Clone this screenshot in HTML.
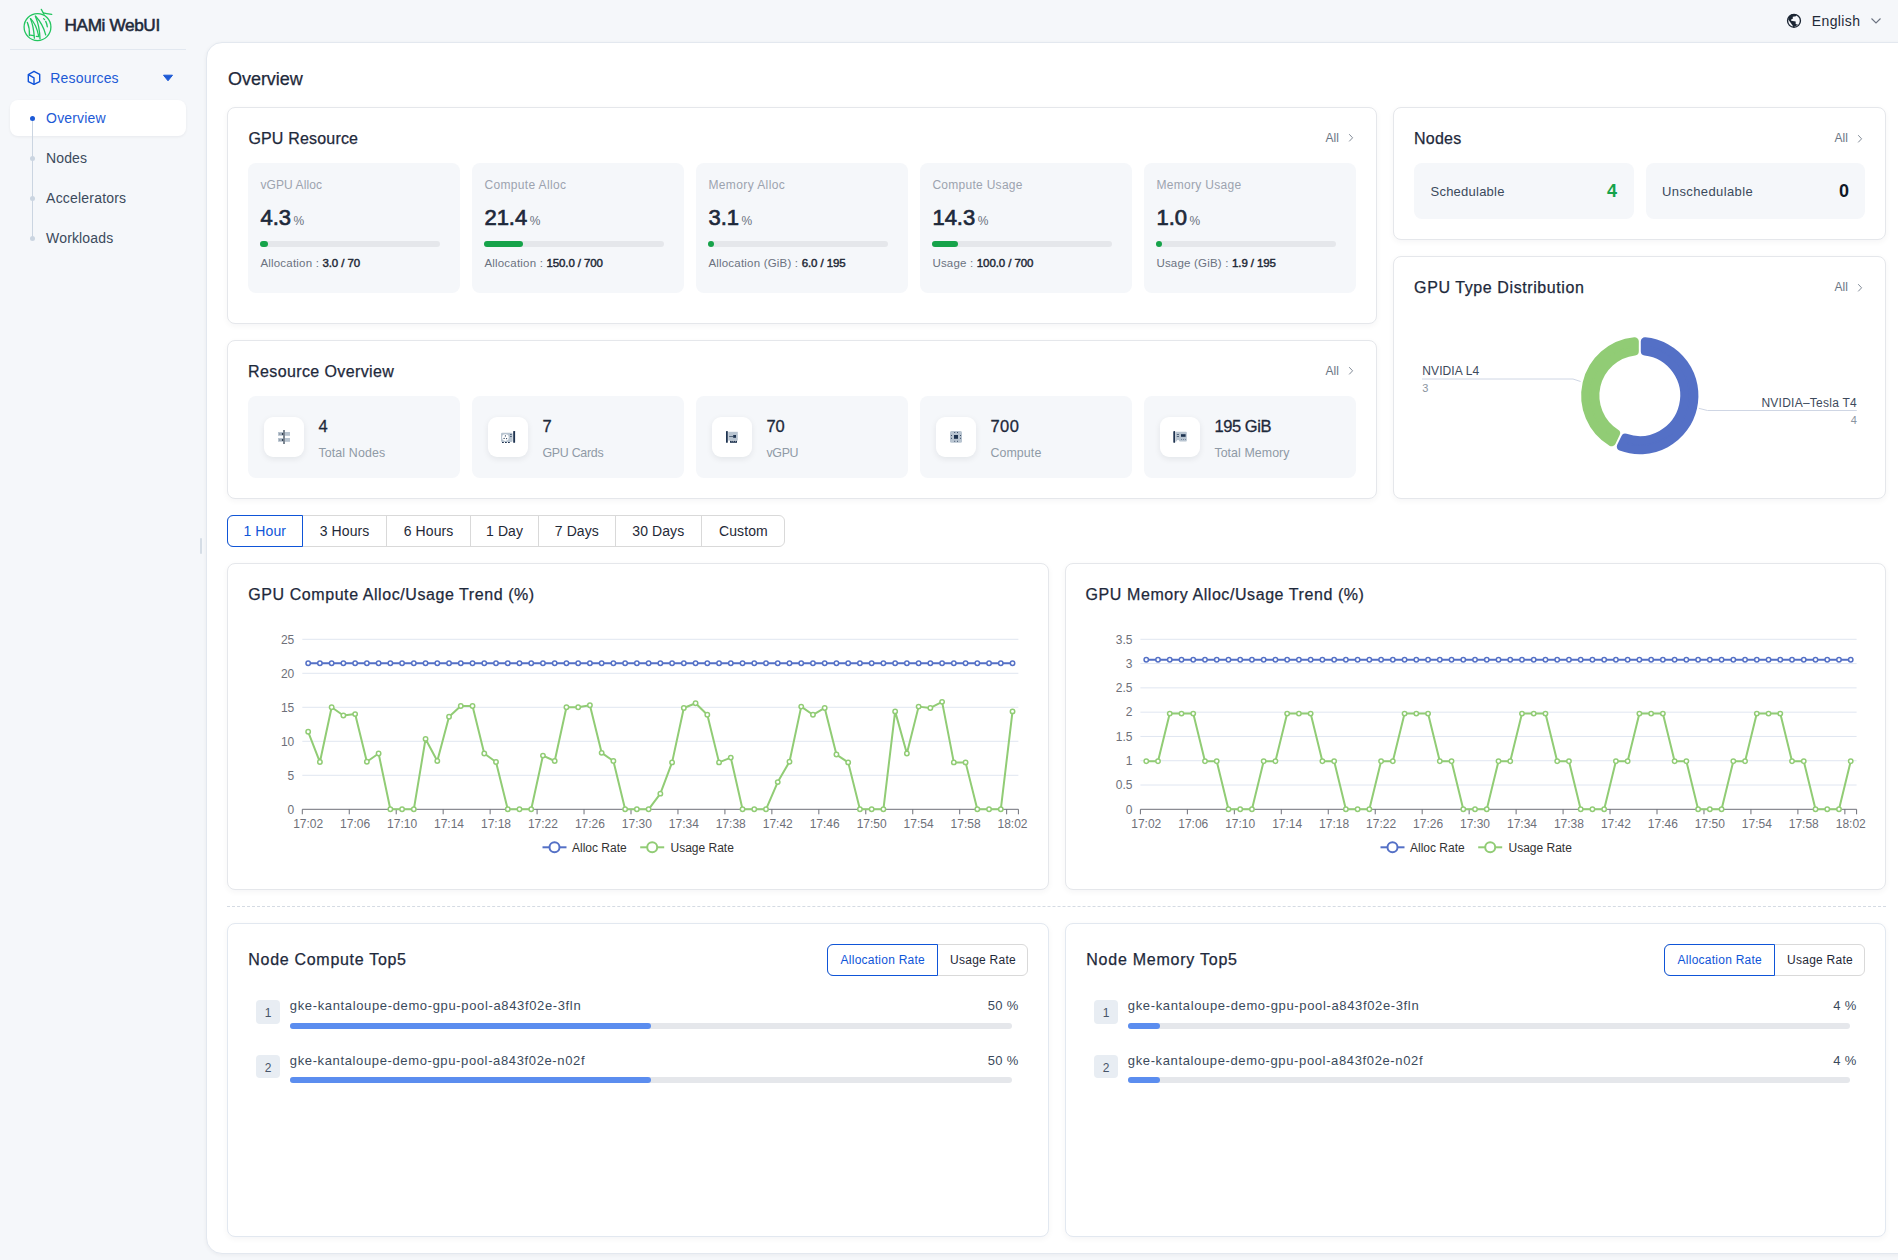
<!DOCTYPE html><html><head><meta charset="utf-8"><style>
html,body{margin:0;padding:0;width:1898px;height:1260px;overflow:hidden;background:#f5f7fa;font-family:"Liberation Sans",sans-serif;}
.t{position:absolute;line-height:1;white-space:nowrap;}
.b{position:absolute;box-sizing:border-box;}
svg{position:absolute;left:0;top:0;}
</style></head><body>
<div class="b" style="left:206px;top:41.8px;width:1760px;height:1212.7px;background:#fff;border:1px solid #e3e8ef;border-radius:16px;box-shadow:0 1px 4px rgba(15,23,42,0.05);"></div>
<div class="b" style="left:10px;top:49px;width:176px;height:1px;background:#e2e8f0;"></div>
<svg width="60" height="50" style="left:18px;top:6px" viewBox="0 0 60 50">
<g fill="none" stroke="#22c55e" stroke-width="1.3" stroke-linecap="round">
<ellipse cx="19.5" cy="21.1" rx="13.4" ry="13.5"/>
<path d="M26 8.2 L23.3 3.4"/>
<path d="M25.2 6.8 Q28 7.6 33.7 8.4"/>
<path d="M9.3 16.3 Q11.8 22 11.4 29.5"/>
<path d="M12.4 12.6 Q15.6 20 16.4 32.2"/>
<path d="M12.6 12.6 Q18.2 18 20.7 30.2"/>
<path d="M17.4 10.2 Q21.6 20 22 32.8"/>
<path d="M17.6 10.2 Q25 18 27.7 28.8"/>
<path d="M25.6 12.6 L26.6 13.6"/>
<path d="M27.7 15.4 Q29 18 29.3 20.8"/>
<path d="M12.3 29.1 L15.7 29.6"/>
<path d="M18.3 30.4 L20.8 30.6"/>
</g></svg>
<div class="t" style="top:16.74px;font-size:17.2px;color:#1e293b;letter-spacing:-0.37px;left:64.50px;-webkit-text-stroke:0.55px #1e293b;">HAMi WebUI</div>
<svg width="16" height="16" style="left:26px;top:70px" viewBox="0 0 16 16">
<g fill="none" stroke="#0f52d9" stroke-width="1.4" stroke-linejoin="round">
<path d="M8 1.3 L13.7 4.4 L13.7 11.6 L8 14.4 L2.3 11.6 L2.3 4.6 Z"/>
<path d="M2.3 4.6 L8 7.8 L8 14.4"/>
</g></svg>
<div class="t" style="top:70.85px;font-size:14px;color:#1d5ad6;letter-spacing:0.173px;left:50.30px;">Resources</div>
<svg width="12" height="8" style="left:162px;top:74px" viewBox="0 0 12 8"><path d="M1.5 1.2 L10.5 1.2 L6 6.8 Z" fill="#1d5ad6" stroke="#1d5ad6" stroke-width="1" stroke-linejoin="round"/></svg>
<div class="b" style="left:10px;top:100px;width:176px;height:35.5px;background:#fff;border-radius:8px;box-shadow:0 1px 3px rgba(15,23,42,0.06);"></div>
<div class="b" style="left:31.8px;top:118px;width:1.2px;height:120px;background:#cbd5e1;"></div>
<div class="b" style="left:29.9px;top:115.5px;width:5px;height:5px;border-radius:50%;background:#1d5ad6"></div>
<div class="b" style="left:29.9px;top:155.5px;width:5px;height:5px;border-radius:50%;background:#cbd5e1"></div>
<div class="b" style="left:29.9px;top:195.5px;width:5px;height:5px;border-radius:50%;background:#cbd5e1"></div>
<div class="b" style="left:29.9px;top:235.5px;width:5px;height:5px;border-radius:50%;background:#cbd5e1"></div>
<div class="t" style="top:110.95px;font-size:14px;color:#1d5ad6;letter-spacing:0.15px;left:46.10px;">Overview</div>
<div class="t" style="top:150.95px;font-size:14px;color:#3b4a5c;letter-spacing:0.1px;left:46.10px;">Nodes</div>
<div class="t" style="top:190.85px;font-size:14px;color:#3b4a5c;letter-spacing:0.2px;left:46.10px;">Accelerators</div>
<div class="t" style="top:230.95px;font-size:14px;color:#3b4a5c;letter-spacing:0.15px;left:46.10px;">Workloads</div>
<div class="b" style="left:200px;top:538px;width:2px;height:16px;background:#d5dde6;border-radius:1px;"></div>
<svg width="1898" height="40" style="left:0;top:0" viewBox="0 0 1898 40">
<circle cx="1794" cy="20.8" r="6.45" fill="none" stroke="#1b2533" stroke-width="1.35"/>
<path d="M1788.25 19.55 L1788.87 16.87 L1791.13 14.39 L1794.02 13.98 L1796.49 14.39 L1795.88 16.25 L1792.78 16.87 L1792.78 18.72 L1791.13 19.55 L1791.13 20.78 L1795.67 21.4 L1795.67 24.08 L1798.14 24.7 L1793.2 27.18 L1792.78 25.73 Z" fill="#1b2533"/>
</svg>
<div class="t" style="top:13.65px;font-size:14px;color:#1f2937;letter-spacing:0.378px;left:1811.80px;">English</div>
<svg width="12" height="8" style="left:1870px;top:17px" viewBox="0 0 12 8"><path d="M1.5 1.5 L6 6 L10.5 1.5" fill="none" stroke="#6b7280" stroke-width="1.1"/></svg>
<div class="t" style="top:70.06px;font-size:18px;color:#1e293b;letter-spacing:-0.045px;left:228.00px;-webkit-text-stroke:0.25px currentColor;">Overview</div>
<div class="b" style="left:227px;top:107px;width:1150px;height:217px;background:#fff;border:1px solid #e5e7eb;border-radius:8px;box-shadow:0 2px 6px rgba(15,23,42,0.045);"></div>
<div class="t" style="top:131.46px;font-size:16px;color:#1e293b;letter-spacing:0.182px;left:248.40px;-webkit-text-stroke:0.25px currentColor;">GPU Resource</div>
<div class="t" style="top:131.74px;font-size:12px;color:#6b7685;letter-spacing:0.1px;left:1325.50px;">All</div>
<svg width="6" height="10" style="left:1347.8px;top:133.3px" viewBox="0 0 6 10"><path d="M1.2 1.2 L4.6 4.8 L1.2 8.4" fill="none" stroke="#7b8591" stroke-width="0.95"/></svg>
<div class="b" style="left:248px;top:163px;width:212px;height:130px;background:#f5f7fa;border-radius:8px;"></div>
<div class="t" style="top:178.94px;font-size:12px;color:#9ca3af;letter-spacing:0.106px;left:260.40px;">vGPU Alloc</div>
<div class="t" style="left:260.4px;top:206.78px;font-size:22px;color:#1e293b;-webkit-text-stroke:0.7px #1e293b;letter-spacing:0px">4.3<span style="font-size:12px;font-weight:400;color:#6b7280;-webkit-text-stroke:0;margin-left:2.5px">%</span></div>
<div class="b" style="left:260px;top:241px;width:180px;height:6px;background:#e5e7eb;border-radius:3px;"></div>
<div class="b" style="left:260px;top:241px;width:7.74px;height:6px;background:#16a34a;border-radius:3px;"></div>
<div class="t" style="left:260.4px;top:258.07px;font-size:11.5px;color:#6b7280;letter-spacing:0.2px">Allocation : <span style="color:#1f2937;-webkit-text-stroke:0.45px #1f2937;letter-spacing:-0.1px">3.0 / 70</span></div>
<div class="b" style="left:472px;top:163px;width:212px;height:130px;background:#f5f7fa;border-radius:8px;"></div>
<div class="t" style="top:178.94px;font-size:12px;color:#9ca3af;letter-spacing:0.347px;left:484.40px;">Compute Alloc</div>
<div class="t" style="left:484.4px;top:206.78px;font-size:22px;color:#1e293b;-webkit-text-stroke:0.7px #1e293b;letter-spacing:0px">21.4<span style="font-size:12px;font-weight:400;color:#6b7280;-webkit-text-stroke:0;margin-left:2.5px">%</span></div>
<div class="b" style="left:484px;top:241px;width:180px;height:6px;background:#e5e7eb;border-radius:3px;"></div>
<div class="b" style="left:484px;top:241px;width:38.52px;height:6px;background:#16a34a;border-radius:3px;"></div>
<div class="t" style="left:484.4px;top:258.07px;font-size:11.5px;color:#6b7280;letter-spacing:0.2px">Allocation : <span style="color:#1f2937;-webkit-text-stroke:0.45px #1f2937;letter-spacing:-0.1px">150.0 / 700</span></div>
<div class="b" style="left:696px;top:163px;width:212px;height:130px;background:#f5f7fa;border-radius:8px;"></div>
<div class="t" style="top:178.94px;font-size:12px;color:#9ca3af;letter-spacing:0.402px;left:708.40px;">Memory Alloc</div>
<div class="t" style="left:708.4px;top:206.78px;font-size:22px;color:#1e293b;-webkit-text-stroke:0.7px #1e293b;letter-spacing:0px">3.1<span style="font-size:12px;font-weight:400;color:#6b7280;-webkit-text-stroke:0;margin-left:2.5px">%</span></div>
<div class="b" style="left:708px;top:241px;width:180px;height:6px;background:#e5e7eb;border-radius:3px;"></div>
<div class="b" style="left:708px;top:241px;width:6px;height:6px;background:#16a34a;border-radius:3px;"></div>
<div class="t" style="left:708.4px;top:258.07px;font-size:11.5px;color:#6b7280;letter-spacing:0.2px">Allocation (GiB) : <span style="color:#1f2937;-webkit-text-stroke:0.45px #1f2937;letter-spacing:-0.1px">6.0 / 195</span></div>
<div class="b" style="left:920px;top:163px;width:212px;height:130px;background:#f5f7fa;border-radius:8px;"></div>
<div class="t" style="top:178.94px;font-size:12px;color:#9ca3af;letter-spacing:0.28px;left:932.40px;">Compute Usage</div>
<div class="t" style="left:932.4px;top:206.78px;font-size:22px;color:#1e293b;-webkit-text-stroke:0.7px #1e293b;letter-spacing:0px">14.3<span style="font-size:12px;font-weight:400;color:#6b7280;-webkit-text-stroke:0;margin-left:2.5px">%</span></div>
<div class="b" style="left:932px;top:241px;width:180px;height:6px;background:#e5e7eb;border-radius:3px;"></div>
<div class="b" style="left:932px;top:241px;width:25.74px;height:6px;background:#16a34a;border-radius:3px;"></div>
<div class="t" style="left:932.4px;top:258.07px;font-size:11.5px;color:#6b7280;letter-spacing:0.2px">Usage : <span style="color:#1f2937;-webkit-text-stroke:0.45px #1f2937;letter-spacing:-0.1px">100.0 / 700</span></div>
<div class="b" style="left:1144px;top:163px;width:212px;height:130px;background:#f5f7fa;border-radius:8px;"></div>
<div class="t" style="top:178.94px;font-size:12px;color:#9ca3af;letter-spacing:0.311px;left:1156.40px;">Memory Usage</div>
<div class="t" style="left:1156.4px;top:206.78px;font-size:22px;color:#1e293b;-webkit-text-stroke:0.7px #1e293b;letter-spacing:0px">1.0<span style="font-size:12px;font-weight:400;color:#6b7280;-webkit-text-stroke:0;margin-left:2.5px">%</span></div>
<div class="b" style="left:1156px;top:241px;width:180px;height:6px;background:#e5e7eb;border-radius:3px;"></div>
<div class="b" style="left:1156px;top:241px;width:6px;height:6px;background:#16a34a;border-radius:3px;"></div>
<div class="t" style="left:1156.4px;top:258.07px;font-size:11.5px;color:#6b7280;letter-spacing:0.2px">Usage (GiB) : <span style="color:#1f2937;-webkit-text-stroke:0.45px #1f2937;letter-spacing:-0.1px">1.9 / 195</span></div>
<div class="b" style="left:1393px;top:107px;width:493px;height:133px;background:#fff;border:1px solid #e5e7eb;border-radius:8px;box-shadow:0 2px 6px rgba(15,23,42,0.045);"></div>
<div class="t" style="top:130.56px;font-size:16px;color:#1e293b;letter-spacing:0.2px;left:1414.10px;-webkit-text-stroke:0.25px currentColor;">Nodes</div>
<div class="t" style="top:132.34px;font-size:12px;color:#6b7685;letter-spacing:0.1px;left:1834.50px;">All</div>
<svg width="6" height="10" style="left:1856.8px;top:133.9px" viewBox="0 0 6 10"><path d="M1.2 1.2 L4.6 4.8 L1.2 8.4" fill="none" stroke="#7b8591" stroke-width="0.95"/></svg>
<div class="b" style="left:1414px;top:163px;width:220px;height:55.5px;background:#f5f7fa;border-radius:8px;"></div>
<div class="b" style="left:1646px;top:163px;width:219px;height:55.5px;background:#f5f7fa;border-radius:8px;"></div>
<div class="t" style="top:184.60px;font-size:13px;color:#3b4a5c;letter-spacing:0.237px;left:1430.50px;">Schedulable</div>
<div class="t" style="top:181.76px;font-size:18px;color:#16a34a;font-weight:700;right:281.00px;">4</div>
<div class="t" style="top:184.60px;font-size:13px;color:#3b4a5c;letter-spacing:0.394px;left:1662.00px;">Unschedulable</div>
<div class="t" style="top:181.76px;font-size:18px;color:#111827;font-weight:700;right:49.00px;">0</div>
<div class="b" style="left:1393px;top:256px;width:493px;height:243px;background:#fff;border:1px solid #e5e7eb;border-radius:8px;box-shadow:0 2px 6px rgba(15,23,42,0.045);"></div>
<div class="t" style="top:279.56px;font-size:16px;color:#1e293b;letter-spacing:0.591px;left:1414.10px;-webkit-text-stroke:0.25px currentColor;">GPU Type Distribution</div>
<div class="t" style="top:281.34px;font-size:12px;color:#6b7685;letter-spacing:0.1px;left:1834.50px;">All</div>
<svg width="6" height="10" style="left:1856.8px;top:282.9px" viewBox="0 0 6 10"><path d="M1.2 1.2 L4.6 4.8 L1.2 8.4" fill="none" stroke="#7b8591" stroke-width="0.95"/></svg>
<div class="b" style="left:227px;top:340px;width:1150px;height:159px;background:#fff;border:1px solid #e5e7eb;border-radius:8px;box-shadow:0 2px 6px rgba(15,23,42,0.045);"></div>
<div class="t" style="top:363.76px;font-size:16px;color:#1e293b;letter-spacing:0.385px;left:248.10px;-webkit-text-stroke:0.25px currentColor;">Resource Overview</div>
<div class="t" style="top:364.84px;font-size:12px;color:#6b7685;letter-spacing:0.1px;left:1325.50px;">All</div>
<svg width="6" height="10" style="left:1347.8px;top:366.4px" viewBox="0 0 6 10"><path d="M1.2 1.2 L4.6 4.8 L1.2 8.4" fill="none" stroke="#7b8591" stroke-width="0.95"/></svg>
<div class="b" style="left:248px;top:396px;width:212px;height:82px;background:#f5f7fa;border-radius:8px;"></div>
<div class="b" style="left:264px;top:417px;width:40px;height:40px;background:#fff;border-radius:9px;box-shadow:0 2px 6px rgba(15,23,42,0.08);"></div>
<div class="t" style="top:418.33px;font-size:16.5px;color:#1e293b;left:318.40px;-webkit-text-stroke:0.3px #1e293b;">4</div>
<div class="t" style="top:447.20px;font-size:12.4px;color:#8f9aa6;letter-spacing:0.136px;left:318.40px;">Total Nodes</div>
<div class="b" style="left:472px;top:396px;width:212px;height:82px;background:#f5f7fa;border-radius:8px;"></div>
<div class="b" style="left:488px;top:417px;width:40px;height:40px;background:#fff;border-radius:9px;box-shadow:0 2px 6px rgba(15,23,42,0.08);"></div>
<div class="t" style="top:418.33px;font-size:16.5px;color:#1e293b;left:542.40px;-webkit-text-stroke:0.3px #1e293b;">7</div>
<div class="t" style="top:447.20px;font-size:12.4px;color:#8f9aa6;letter-spacing:-0.256px;left:542.40px;">GPU Cards</div>
<div class="b" style="left:696px;top:396px;width:212px;height:82px;background:#f5f7fa;border-radius:8px;"></div>
<div class="b" style="left:712px;top:417px;width:40px;height:40px;background:#fff;border-radius:9px;box-shadow:0 2px 6px rgba(15,23,42,0.08);"></div>
<div class="t" style="top:418.33px;font-size:16.5px;color:#1e293b;letter-spacing:-0.077px;left:766.40px;-webkit-text-stroke:0.3px #1e293b;">70</div>
<div class="t" style="top:447.20px;font-size:12.4px;color:#8f9aa6;letter-spacing:-0.299px;left:766.40px;">vGPU</div>
<div class="b" style="left:920px;top:396px;width:212px;height:82px;background:#f5f7fa;border-radius:8px;"></div>
<div class="b" style="left:936px;top:417px;width:40px;height:40px;background:#fff;border-radius:9px;box-shadow:0 2px 6px rgba(15,23,42,0.08);"></div>
<div class="t" style="top:418.33px;font-size:16.5px;color:#1e293b;letter-spacing:0.523px;left:990.40px;-webkit-text-stroke:0.3px #1e293b;">700</div>
<div class="t" style="top:447.20px;font-size:12.4px;color:#8f9aa6;letter-spacing:0.102px;left:990.40px;">Compute</div>
<div class="b" style="left:1144px;top:396px;width:212px;height:82px;background:#f5f7fa;border-radius:8px;"></div>
<div class="b" style="left:1160px;top:417px;width:40px;height:40px;background:#fff;border-radius:9px;box-shadow:0 2px 6px rgba(15,23,42,0.08);"></div>
<div class="t" style="top:418.33px;font-size:16.5px;color:#1e293b;letter-spacing:-0.419px;left:1214.40px;-webkit-text-stroke:0.3px #1e293b;">195 GiB</div>
<div class="t" style="top:447.20px;font-size:12.4px;color:#8f9aa6;letter-spacing:0.067px;left:1214.40px;">Total Memory</div>
<div class="b" style="left:227px;top:515px;width:558.4px;height:32px;border:1px solid #d9d9d9;border-radius:6px;background:#fff;"></div>
<div class="b" style="left:302.0px;top:515px;width:1px;height:32px;background:#d9d9d9;"></div>
<div class="b" style="left:386.1px;top:515px;width:1px;height:32px;background:#d9d9d9;"></div>
<div class="b" style="left:470.1px;top:515px;width:1px;height:32px;background:#d9d9d9;"></div>
<div class="b" style="left:538.0px;top:515px;width:1px;height:32px;background:#d9d9d9;"></div>
<div class="b" style="left:614.7px;top:515px;width:1px;height:32px;background:#d9d9d9;"></div>
<div class="b" style="left:700.9px;top:515px;width:1px;height:32px;background:#d9d9d9;"></div>
<div class="b" style="left:227px;top:515px;width:76.0px;height:32px;border:1px solid #0f55d8;border-radius:6px 0 0 6px;"></div>
<div class="t" style="top:524.25px;font-size:14px;color:#0f55d8;letter-spacing:0.1px;left:264.75px;transform:translateX(-50%);">1 Hour</div>
<div class="t" style="top:524.25px;font-size:14px;color:#1f2937;letter-spacing:0.1px;left:344.55px;transform:translateX(-50%);">3 Hours</div>
<div class="t" style="top:524.25px;font-size:14px;color:#1f2937;letter-spacing:0.1px;left:428.60px;transform:translateX(-50%);">6 Hours</div>
<div class="t" style="top:524.25px;font-size:14px;color:#1f2937;letter-spacing:0.1px;left:504.55px;transform:translateX(-50%);">1 Day</div>
<div class="t" style="top:524.25px;font-size:14px;color:#1f2937;letter-spacing:0.1px;left:576.85px;transform:translateX(-50%);">7 Days</div>
<div class="t" style="top:524.25px;font-size:14px;color:#1f2937;letter-spacing:0.1px;left:658.30px;transform:translateX(-50%);">30 Days</div>
<div class="t" style="top:524.25px;font-size:14px;color:#1f2937;letter-spacing:0.1px;left:743.40px;transform:translateX(-50%);">Custom</div>
<div class="b" style="left:227px;top:563px;width:822px;height:327px;background:#fff;border:1px solid #e5e7eb;border-radius:8px;box-shadow:0 2px 6px rgba(15,23,42,0.045);"></div>
<div class="b" style="left:1065px;top:563px;width:821px;height:327px;background:#fff;border:1px solid #e5e7eb;border-radius:8px;box-shadow:0 2px 6px rgba(15,23,42,0.045);"></div>
<div class="t" style="top:586.96px;font-size:16px;color:#1e293b;letter-spacing:0.569px;left:248.30px;-webkit-text-stroke:0.25px currentColor;">GPU Compute Alloc/Usage Trend (%)</div>
<div class="t" style="top:586.96px;font-size:16px;color:#1e293b;letter-spacing:0.575px;left:1085.60px;-webkit-text-stroke:0.25px currentColor;">GPU Memory Alloc/Usage Trend (%)</div>
<div class="b" style="left:227px;top:906px;width:1659px;height:1px;border-top:1px dashed #d5dbe3;"></div>
<div class="b" style="left:227px;top:923px;width:822px;height:314px;background:#fff;border:1px solid #e2e8f0;border-radius:8px;box-shadow:0 2px 6px rgba(15,23,42,0.045);"></div>
<div class="t" style="top:952.36px;font-size:16px;color:#1e293b;letter-spacing:0.703px;left:248.30px;-webkit-text-stroke:0.25px currentColor;">Node Compute Top5</div>
<div class="b" style="left:827px;top:944px;width:201px;height:31.5px;border:1px solid #d9d9d9;border-radius:6px;background:#fff;"></div>
<div class="b" style="left:827px;top:944px;width:111.2px;height:31.5px;border:1px solid #0f55d8;border-radius:6px 0 0 6px;"></div>
<div class="t" style="top:953.94px;font-size:12px;color:#0f55d8;letter-spacing:0.25px;left:882.80px;transform:translateX(-50%);">Allocation Rate</div>
<div class="t" style="top:953.94px;font-size:12px;color:#1f2937;letter-spacing:0.25px;left:983.00px;transform:translateX(-50%);">Usage Rate</div>
<div class="b" style="left:256.2px;top:1000.0px;width:24px;height:23.5px;background:#e8edf3;border-radius:4px;"></div>
<div class="t" style="top:1007.34px;font-size:12px;color:#475569;left:268.20px;transform:translateX(-50%);">1</div>
<div class="t" style="top:998.60px;font-size:13px;color:#3b4a5c;letter-spacing:0.642px;left:289.80px;">gke-kantaloupe-demo-gpu-pool-a843f02e-3fln</div>
<div class="t" style="top:999.00px;font-size:13px;color:#3b4a5c;letter-spacing:0.3px;right:879.50px;">50 %</div>
<div class="b" style="left:290.3px;top:1023.0px;width:722px;height:6px;background:#e5e7eb;border-radius:3px;"></div>
<div class="b" style="left:290.3px;top:1023.0px;width:361.0px;height:6px;background:#5b8def;border-radius:3px;"></div>
<div class="b" style="left:256.2px;top:1054.7px;width:24px;height:23.5px;background:#e8edf3;border-radius:4px;"></div>
<div class="t" style="top:1062.04px;font-size:12px;color:#475569;left:268.20px;transform:translateX(-50%);">2</div>
<div class="t" style="top:1054.10px;font-size:13px;color:#3b4a5c;letter-spacing:0.631px;left:289.80px;">gke-kantaloupe-demo-gpu-pool-a843f02e-n02f</div>
<div class="t" style="top:1053.70px;font-size:13px;color:#3b4a5c;letter-spacing:0.3px;right:879.50px;">50 %</div>
<div class="b" style="left:290.3px;top:1077.1px;width:722px;height:6px;background:#e5e7eb;border-radius:3px;"></div>
<div class="b" style="left:290.3px;top:1077.1px;width:361.0px;height:6px;background:#5b8def;border-radius:3px;"></div>
<div class="b" style="left:1065px;top:923px;width:821px;height:314px;background:#fff;border:1px solid #e2e8f0;border-radius:8px;box-shadow:0 2px 6px rgba(15,23,42,0.045);"></div>
<div class="t" style="top:952.36px;font-size:16px;color:#1e293b;letter-spacing:0.759px;left:1086.30px;-webkit-text-stroke:0.25px currentColor;">Node Memory Top5</div>
<div class="b" style="left:1664px;top:944px;width:201px;height:31.5px;border:1px solid #d9d9d9;border-radius:6px;background:#fff;"></div>
<div class="b" style="left:1664px;top:944px;width:111.2px;height:31.5px;border:1px solid #0f55d8;border-radius:6px 0 0 6px;"></div>
<div class="t" style="top:953.94px;font-size:12px;color:#0f55d8;letter-spacing:0.25px;left:1719.80px;transform:translateX(-50%);">Allocation Rate</div>
<div class="t" style="top:953.94px;font-size:12px;color:#1f2937;letter-spacing:0.25px;left:1820.00px;transform:translateX(-50%);">Usage Rate</div>
<div class="b" style="left:1094.2px;top:1000.0px;width:24px;height:23.5px;background:#e8edf3;border-radius:4px;"></div>
<div class="t" style="top:1007.34px;font-size:12px;color:#475569;left:1106.20px;transform:translateX(-50%);">1</div>
<div class="t" style="top:998.60px;font-size:13px;color:#3b4a5c;letter-spacing:0.642px;left:1127.80px;">gke-kantaloupe-demo-gpu-pool-a843f02e-3fln</div>
<div class="t" style="top:999.00px;font-size:13px;color:#3b4a5c;letter-spacing:0.3px;right:41.50px;">4 %</div>
<div class="b" style="left:1128.3px;top:1023.0px;width:722px;height:6px;background:#e5e7eb;border-radius:3px;"></div>
<div class="b" style="left:1128.3px;top:1023.0px;width:32px;height:6px;background:#5b8def;border-radius:3px;"></div>
<div class="b" style="left:1094.2px;top:1054.7px;width:24px;height:23.5px;background:#e8edf3;border-radius:4px;"></div>
<div class="t" style="top:1062.04px;font-size:12px;color:#475569;left:1106.20px;transform:translateX(-50%);">2</div>
<div class="t" style="top:1054.10px;font-size:13px;color:#3b4a5c;letter-spacing:0.631px;left:1127.80px;">gke-kantaloupe-demo-gpu-pool-a843f02e-n02f</div>
<div class="t" style="top:1053.70px;font-size:13px;color:#3b4a5c;letter-spacing:0.3px;right:41.50px;">4 %</div>
<div class="b" style="left:1128.3px;top:1077.1px;width:722px;height:6px;background:#e5e7eb;border-radius:3px;"></div>
<div class="b" style="left:1128.3px;top:1077.1px;width:32px;height:6px;background:#5b8def;border-radius:3px;"></div>
<svg width="1898" height="1260" viewBox="0 0 1898 1260" style="font-family:"Liberation Sans", sans-serif"><text x="294.3" y="813.50" text-anchor="end" font-size="12" fill="#6e7079">0</text><line x1="302.3" y1="775.30" x2="1018.4" y2="775.30" stroke="#e0e6f1" stroke-width="1"/><text x="294.3" y="779.50" text-anchor="end" font-size="12" fill="#6e7079">5</text><line x1="302.3" y1="741.30" x2="1018.4" y2="741.30" stroke="#e0e6f1" stroke-width="1"/><text x="294.3" y="745.50" text-anchor="end" font-size="12" fill="#6e7079">10</text><line x1="302.3" y1="707.30" x2="1018.4" y2="707.30" stroke="#e0e6f1" stroke-width="1"/><text x="294.3" y="711.50" text-anchor="end" font-size="12" fill="#6e7079">15</text><line x1="302.3" y1="673.30" x2="1018.4" y2="673.30" stroke="#e0e6f1" stroke-width="1"/><text x="294.3" y="677.50" text-anchor="end" font-size="12" fill="#6e7079">20</text><line x1="302.3" y1="639.30" x2="1018.4" y2="639.30" stroke="#e0e6f1" stroke-width="1"/><text x="294.3" y="643.50" text-anchor="end" font-size="12" fill="#6e7079">25</text><line x1="302.3" y1="809.3" x2="1018.4" y2="809.3" stroke="#6e7079" stroke-width="1"/><line x1="302.30" y1="809.3" x2="302.30" y2="814.3" stroke="#6e7079" stroke-width="1"/><line x1="349.26" y1="809.3" x2="349.26" y2="814.3" stroke="#6e7079" stroke-width="1"/><line x1="396.21" y1="809.3" x2="396.21" y2="814.3" stroke="#6e7079" stroke-width="1"/><line x1="443.17" y1="809.3" x2="443.17" y2="814.3" stroke="#6e7079" stroke-width="1"/><line x1="490.13" y1="809.3" x2="490.13" y2="814.3" stroke="#6e7079" stroke-width="1"/><line x1="537.09" y1="809.3" x2="537.09" y2="814.3" stroke="#6e7079" stroke-width="1"/><line x1="584.04" y1="809.3" x2="584.04" y2="814.3" stroke="#6e7079" stroke-width="1"/><line x1="631.00" y1="809.3" x2="631.00" y2="814.3" stroke="#6e7079" stroke-width="1"/><line x1="677.96" y1="809.3" x2="677.96" y2="814.3" stroke="#6e7079" stroke-width="1"/><line x1="724.92" y1="809.3" x2="724.92" y2="814.3" stroke="#6e7079" stroke-width="1"/><line x1="771.87" y1="809.3" x2="771.87" y2="814.3" stroke="#6e7079" stroke-width="1"/><line x1="818.83" y1="809.3" x2="818.83" y2="814.3" stroke="#6e7079" stroke-width="1"/><line x1="865.79" y1="809.3" x2="865.79" y2="814.3" stroke="#6e7079" stroke-width="1"/><line x1="912.75" y1="809.3" x2="912.75" y2="814.3" stroke="#6e7079" stroke-width="1"/><line x1="959.70" y1="809.3" x2="959.70" y2="814.3" stroke="#6e7079" stroke-width="1"/><line x1="1006.66" y1="809.3" x2="1006.66" y2="814.3" stroke="#6e7079" stroke-width="1"/><line x1="1018.40" y1="809.3" x2="1018.40" y2="814.3" stroke="#6e7079" stroke-width="1"/><text x="308.17" y="827.60" text-anchor="middle" font-size="12" fill="#6e7079">17:02</text><text x="355.13" y="827.60" text-anchor="middle" font-size="12" fill="#6e7079">17:06</text><text x="402.08" y="827.60" text-anchor="middle" font-size="12" fill="#6e7079">17:10</text><text x="449.04" y="827.60" text-anchor="middle" font-size="12" fill="#6e7079">17:14</text><text x="496.00" y="827.60" text-anchor="middle" font-size="12" fill="#6e7079">17:18</text><text x="542.96" y="827.60" text-anchor="middle" font-size="12" fill="#6e7079">17:22</text><text x="589.91" y="827.60" text-anchor="middle" font-size="12" fill="#6e7079">17:26</text><text x="636.87" y="827.60" text-anchor="middle" font-size="12" fill="#6e7079">17:30</text><text x="683.83" y="827.60" text-anchor="middle" font-size="12" fill="#6e7079">17:34</text><text x="730.79" y="827.60" text-anchor="middle" font-size="12" fill="#6e7079">17:38</text><text x="777.74" y="827.60" text-anchor="middle" font-size="12" fill="#6e7079">17:42</text><text x="824.70" y="827.60" text-anchor="middle" font-size="12" fill="#6e7079">17:46</text><text x="871.66" y="827.60" text-anchor="middle" font-size="12" fill="#6e7079">17:50</text><text x="918.62" y="827.60" text-anchor="middle" font-size="12" fill="#6e7079">17:54</text><text x="965.57" y="827.60" text-anchor="middle" font-size="12" fill="#6e7079">17:58</text><text x="1012.53" y="827.60" text-anchor="middle" font-size="12" fill="#6e7079">18:02</text><path d="M308.17 663.24 L319.91 663.24 L331.65 663.24 L343.39 663.24 L355.13 663.24 L366.87 663.24 L378.61 663.24 L390.35 663.24 L402.08 663.24 L413.82 663.24 L425.56 663.24 L437.30 663.24 L449.04 663.24 L460.78 663.24 L472.52 663.24 L484.26 663.24 L496.00 663.24 L507.74 663.24 L519.48 663.24 L531.22 663.24 L542.96 663.24 L554.70 663.24 L566.44 663.24 L578.17 663.24 L589.91 663.24 L601.65 663.24 L613.39 663.24 L625.13 663.24 L636.87 663.24 L648.61 663.24 L660.35 663.24 L672.09 663.24 L683.83 663.24 L695.57 663.24 L707.31 663.24 L719.05 663.24 L730.79 663.24 L742.53 663.24 L754.26 663.24 L766.00 663.24 L777.74 663.24 L789.48 663.24 L801.22 663.24 L812.96 663.24 L824.70 663.24 L836.44 663.24 L848.18 663.24 L859.92 663.24 L871.66 663.24 L883.40 663.24 L895.14 663.24 L906.88 663.24 L918.62 663.24 L930.35 663.24 L942.09 663.24 L953.83 663.24 L965.57 663.24 L977.31 663.24 L989.05 663.24 L1000.79 663.24 L1012.53 663.24" fill="none" stroke="#5470c6" stroke-width="2" stroke-linejoin="bevel"/><circle cx="308.17" cy="663.24" r="2.2" fill="#fff" stroke="#5470c6" stroke-width="1.5"/><circle cx="319.91" cy="663.24" r="2.2" fill="#fff" stroke="#5470c6" stroke-width="1.5"/><circle cx="331.65" cy="663.24" r="2.2" fill="#fff" stroke="#5470c6" stroke-width="1.5"/><circle cx="343.39" cy="663.24" r="2.2" fill="#fff" stroke="#5470c6" stroke-width="1.5"/><circle cx="355.13" cy="663.24" r="2.2" fill="#fff" stroke="#5470c6" stroke-width="1.5"/><circle cx="366.87" cy="663.24" r="2.2" fill="#fff" stroke="#5470c6" stroke-width="1.5"/><circle cx="378.61" cy="663.24" r="2.2" fill="#fff" stroke="#5470c6" stroke-width="1.5"/><circle cx="390.35" cy="663.24" r="2.2" fill="#fff" stroke="#5470c6" stroke-width="1.5"/><circle cx="402.08" cy="663.24" r="2.2" fill="#fff" stroke="#5470c6" stroke-width="1.5"/><circle cx="413.82" cy="663.24" r="2.2" fill="#fff" stroke="#5470c6" stroke-width="1.5"/><circle cx="425.56" cy="663.24" r="2.2" fill="#fff" stroke="#5470c6" stroke-width="1.5"/><circle cx="437.30" cy="663.24" r="2.2" fill="#fff" stroke="#5470c6" stroke-width="1.5"/><circle cx="449.04" cy="663.24" r="2.2" fill="#fff" stroke="#5470c6" stroke-width="1.5"/><circle cx="460.78" cy="663.24" r="2.2" fill="#fff" stroke="#5470c6" stroke-width="1.5"/><circle cx="472.52" cy="663.24" r="2.2" fill="#fff" stroke="#5470c6" stroke-width="1.5"/><circle cx="484.26" cy="663.24" r="2.2" fill="#fff" stroke="#5470c6" stroke-width="1.5"/><circle cx="496.00" cy="663.24" r="2.2" fill="#fff" stroke="#5470c6" stroke-width="1.5"/><circle cx="507.74" cy="663.24" r="2.2" fill="#fff" stroke="#5470c6" stroke-width="1.5"/><circle cx="519.48" cy="663.24" r="2.2" fill="#fff" stroke="#5470c6" stroke-width="1.5"/><circle cx="531.22" cy="663.24" r="2.2" fill="#fff" stroke="#5470c6" stroke-width="1.5"/><circle cx="542.96" cy="663.24" r="2.2" fill="#fff" stroke="#5470c6" stroke-width="1.5"/><circle cx="554.70" cy="663.24" r="2.2" fill="#fff" stroke="#5470c6" stroke-width="1.5"/><circle cx="566.44" cy="663.24" r="2.2" fill="#fff" stroke="#5470c6" stroke-width="1.5"/><circle cx="578.17" cy="663.24" r="2.2" fill="#fff" stroke="#5470c6" stroke-width="1.5"/><circle cx="589.91" cy="663.24" r="2.2" fill="#fff" stroke="#5470c6" stroke-width="1.5"/><circle cx="601.65" cy="663.24" r="2.2" fill="#fff" stroke="#5470c6" stroke-width="1.5"/><circle cx="613.39" cy="663.24" r="2.2" fill="#fff" stroke="#5470c6" stroke-width="1.5"/><circle cx="625.13" cy="663.24" r="2.2" fill="#fff" stroke="#5470c6" stroke-width="1.5"/><circle cx="636.87" cy="663.24" r="2.2" fill="#fff" stroke="#5470c6" stroke-width="1.5"/><circle cx="648.61" cy="663.24" r="2.2" fill="#fff" stroke="#5470c6" stroke-width="1.5"/><circle cx="660.35" cy="663.24" r="2.2" fill="#fff" stroke="#5470c6" stroke-width="1.5"/><circle cx="672.09" cy="663.24" r="2.2" fill="#fff" stroke="#5470c6" stroke-width="1.5"/><circle cx="683.83" cy="663.24" r="2.2" fill="#fff" stroke="#5470c6" stroke-width="1.5"/><circle cx="695.57" cy="663.24" r="2.2" fill="#fff" stroke="#5470c6" stroke-width="1.5"/><circle cx="707.31" cy="663.24" r="2.2" fill="#fff" stroke="#5470c6" stroke-width="1.5"/><circle cx="719.05" cy="663.24" r="2.2" fill="#fff" stroke="#5470c6" stroke-width="1.5"/><circle cx="730.79" cy="663.24" r="2.2" fill="#fff" stroke="#5470c6" stroke-width="1.5"/><circle cx="742.53" cy="663.24" r="2.2" fill="#fff" stroke="#5470c6" stroke-width="1.5"/><circle cx="754.26" cy="663.24" r="2.2" fill="#fff" stroke="#5470c6" stroke-width="1.5"/><circle cx="766.00" cy="663.24" r="2.2" fill="#fff" stroke="#5470c6" stroke-width="1.5"/><circle cx="777.74" cy="663.24" r="2.2" fill="#fff" stroke="#5470c6" stroke-width="1.5"/><circle cx="789.48" cy="663.24" r="2.2" fill="#fff" stroke="#5470c6" stroke-width="1.5"/><circle cx="801.22" cy="663.24" r="2.2" fill="#fff" stroke="#5470c6" stroke-width="1.5"/><circle cx="812.96" cy="663.24" r="2.2" fill="#fff" stroke="#5470c6" stroke-width="1.5"/><circle cx="824.70" cy="663.24" r="2.2" fill="#fff" stroke="#5470c6" stroke-width="1.5"/><circle cx="836.44" cy="663.24" r="2.2" fill="#fff" stroke="#5470c6" stroke-width="1.5"/><circle cx="848.18" cy="663.24" r="2.2" fill="#fff" stroke="#5470c6" stroke-width="1.5"/><circle cx="859.92" cy="663.24" r="2.2" fill="#fff" stroke="#5470c6" stroke-width="1.5"/><circle cx="871.66" cy="663.24" r="2.2" fill="#fff" stroke="#5470c6" stroke-width="1.5"/><circle cx="883.40" cy="663.24" r="2.2" fill="#fff" stroke="#5470c6" stroke-width="1.5"/><circle cx="895.14" cy="663.24" r="2.2" fill="#fff" stroke="#5470c6" stroke-width="1.5"/><circle cx="906.88" cy="663.24" r="2.2" fill="#fff" stroke="#5470c6" stroke-width="1.5"/><circle cx="918.62" cy="663.24" r="2.2" fill="#fff" stroke="#5470c6" stroke-width="1.5"/><circle cx="930.35" cy="663.24" r="2.2" fill="#fff" stroke="#5470c6" stroke-width="1.5"/><circle cx="942.09" cy="663.24" r="2.2" fill="#fff" stroke="#5470c6" stroke-width="1.5"/><circle cx="953.83" cy="663.24" r="2.2" fill="#fff" stroke="#5470c6" stroke-width="1.5"/><circle cx="965.57" cy="663.24" r="2.2" fill="#fff" stroke="#5470c6" stroke-width="1.5"/><circle cx="977.31" cy="663.24" r="2.2" fill="#fff" stroke="#5470c6" stroke-width="1.5"/><circle cx="989.05" cy="663.24" r="2.2" fill="#fff" stroke="#5470c6" stroke-width="1.5"/><circle cx="1000.79" cy="663.24" r="2.2" fill="#fff" stroke="#5470c6" stroke-width="1.5"/><circle cx="1012.53" cy="663.24" r="2.2" fill="#fff" stroke="#5470c6" stroke-width="1.5"/><path d="M308.17 731.78 L319.91 762.04 L331.65 707.30 L343.39 715.46 L355.13 714.10 L366.87 761.70 L378.61 753.54 L390.35 809.30 L402.08 809.30 L413.82 809.30 L425.56 738.92 L437.30 761.02 L449.04 716.82 L460.78 705.94 L472.52 705.94 L484.26 753.54 L496.00 762.04 L507.74 809.30 L519.48 809.30 L531.22 809.30 L542.96 755.58 L554.70 761.02 L566.44 707.30 L578.17 707.30 L589.91 705.26 L601.65 752.86 L613.39 761.02 L625.13 809.30 L636.87 809.30 L648.61 809.30 L660.35 793.66 L672.09 762.38 L683.83 707.98 L695.57 703.22 L707.31 714.78 L719.05 762.38 L730.79 757.62 L742.53 809.30 L754.26 809.30 L766.00 809.30 L777.74 782.10 L789.48 761.70 L801.22 706.62 L812.96 714.78 L824.70 707.98 L836.44 754.56 L848.18 762.38 L859.92 809.30 L871.66 809.30 L883.40 809.30 L895.14 711.38 L906.88 753.54 L918.62 706.62 L930.35 707.98 L942.09 701.86 L953.83 762.38 L965.57 762.38 L977.31 809.30 L989.05 809.30 L1000.79 809.30 L1012.53 711.38" fill="none" stroke="#91cc75" stroke-width="2" stroke-linejoin="bevel"/><circle cx="308.17" cy="731.78" r="2.2" fill="#fff" stroke="#91cc75" stroke-width="1.5"/><circle cx="319.91" cy="762.04" r="2.2" fill="#fff" stroke="#91cc75" stroke-width="1.5"/><circle cx="331.65" cy="707.30" r="2.2" fill="#fff" stroke="#91cc75" stroke-width="1.5"/><circle cx="343.39" cy="715.46" r="2.2" fill="#fff" stroke="#91cc75" stroke-width="1.5"/><circle cx="355.13" cy="714.10" r="2.2" fill="#fff" stroke="#91cc75" stroke-width="1.5"/><circle cx="366.87" cy="761.70" r="2.2" fill="#fff" stroke="#91cc75" stroke-width="1.5"/><circle cx="378.61" cy="753.54" r="2.2" fill="#fff" stroke="#91cc75" stroke-width="1.5"/><circle cx="390.35" cy="809.30" r="2.2" fill="#fff" stroke="#91cc75" stroke-width="1.5"/><circle cx="402.08" cy="809.30" r="2.2" fill="#fff" stroke="#91cc75" stroke-width="1.5"/><circle cx="413.82" cy="809.30" r="2.2" fill="#fff" stroke="#91cc75" stroke-width="1.5"/><circle cx="425.56" cy="738.92" r="2.2" fill="#fff" stroke="#91cc75" stroke-width="1.5"/><circle cx="437.30" cy="761.02" r="2.2" fill="#fff" stroke="#91cc75" stroke-width="1.5"/><circle cx="449.04" cy="716.82" r="2.2" fill="#fff" stroke="#91cc75" stroke-width="1.5"/><circle cx="460.78" cy="705.94" r="2.2" fill="#fff" stroke="#91cc75" stroke-width="1.5"/><circle cx="472.52" cy="705.94" r="2.2" fill="#fff" stroke="#91cc75" stroke-width="1.5"/><circle cx="484.26" cy="753.54" r="2.2" fill="#fff" stroke="#91cc75" stroke-width="1.5"/><circle cx="496.00" cy="762.04" r="2.2" fill="#fff" stroke="#91cc75" stroke-width="1.5"/><circle cx="507.74" cy="809.30" r="2.2" fill="#fff" stroke="#91cc75" stroke-width="1.5"/><circle cx="519.48" cy="809.30" r="2.2" fill="#fff" stroke="#91cc75" stroke-width="1.5"/><circle cx="531.22" cy="809.30" r="2.2" fill="#fff" stroke="#91cc75" stroke-width="1.5"/><circle cx="542.96" cy="755.58" r="2.2" fill="#fff" stroke="#91cc75" stroke-width="1.5"/><circle cx="554.70" cy="761.02" r="2.2" fill="#fff" stroke="#91cc75" stroke-width="1.5"/><circle cx="566.44" cy="707.30" r="2.2" fill="#fff" stroke="#91cc75" stroke-width="1.5"/><circle cx="578.17" cy="707.30" r="2.2" fill="#fff" stroke="#91cc75" stroke-width="1.5"/><circle cx="589.91" cy="705.26" r="2.2" fill="#fff" stroke="#91cc75" stroke-width="1.5"/><circle cx="601.65" cy="752.86" r="2.2" fill="#fff" stroke="#91cc75" stroke-width="1.5"/><circle cx="613.39" cy="761.02" r="2.2" fill="#fff" stroke="#91cc75" stroke-width="1.5"/><circle cx="625.13" cy="809.30" r="2.2" fill="#fff" stroke="#91cc75" stroke-width="1.5"/><circle cx="636.87" cy="809.30" r="2.2" fill="#fff" stroke="#91cc75" stroke-width="1.5"/><circle cx="648.61" cy="809.30" r="2.2" fill="#fff" stroke="#91cc75" stroke-width="1.5"/><circle cx="660.35" cy="793.66" r="2.2" fill="#fff" stroke="#91cc75" stroke-width="1.5"/><circle cx="672.09" cy="762.38" r="2.2" fill="#fff" stroke="#91cc75" stroke-width="1.5"/><circle cx="683.83" cy="707.98" r="2.2" fill="#fff" stroke="#91cc75" stroke-width="1.5"/><circle cx="695.57" cy="703.22" r="2.2" fill="#fff" stroke="#91cc75" stroke-width="1.5"/><circle cx="707.31" cy="714.78" r="2.2" fill="#fff" stroke="#91cc75" stroke-width="1.5"/><circle cx="719.05" cy="762.38" r="2.2" fill="#fff" stroke="#91cc75" stroke-width="1.5"/><circle cx="730.79" cy="757.62" r="2.2" fill="#fff" stroke="#91cc75" stroke-width="1.5"/><circle cx="742.53" cy="809.30" r="2.2" fill="#fff" stroke="#91cc75" stroke-width="1.5"/><circle cx="754.26" cy="809.30" r="2.2" fill="#fff" stroke="#91cc75" stroke-width="1.5"/><circle cx="766.00" cy="809.30" r="2.2" fill="#fff" stroke="#91cc75" stroke-width="1.5"/><circle cx="777.74" cy="782.10" r="2.2" fill="#fff" stroke="#91cc75" stroke-width="1.5"/><circle cx="789.48" cy="761.70" r="2.2" fill="#fff" stroke="#91cc75" stroke-width="1.5"/><circle cx="801.22" cy="706.62" r="2.2" fill="#fff" stroke="#91cc75" stroke-width="1.5"/><circle cx="812.96" cy="714.78" r="2.2" fill="#fff" stroke="#91cc75" stroke-width="1.5"/><circle cx="824.70" cy="707.98" r="2.2" fill="#fff" stroke="#91cc75" stroke-width="1.5"/><circle cx="836.44" cy="754.56" r="2.2" fill="#fff" stroke="#91cc75" stroke-width="1.5"/><circle cx="848.18" cy="762.38" r="2.2" fill="#fff" stroke="#91cc75" stroke-width="1.5"/><circle cx="859.92" cy="809.30" r="2.2" fill="#fff" stroke="#91cc75" stroke-width="1.5"/><circle cx="871.66" cy="809.30" r="2.2" fill="#fff" stroke="#91cc75" stroke-width="1.5"/><circle cx="883.40" cy="809.30" r="2.2" fill="#fff" stroke="#91cc75" stroke-width="1.5"/><circle cx="895.14" cy="711.38" r="2.2" fill="#fff" stroke="#91cc75" stroke-width="1.5"/><circle cx="906.88" cy="753.54" r="2.2" fill="#fff" stroke="#91cc75" stroke-width="1.5"/><circle cx="918.62" cy="706.62" r="2.2" fill="#fff" stroke="#91cc75" stroke-width="1.5"/><circle cx="930.35" cy="707.98" r="2.2" fill="#fff" stroke="#91cc75" stroke-width="1.5"/><circle cx="942.09" cy="701.86" r="2.2" fill="#fff" stroke="#91cc75" stroke-width="1.5"/><circle cx="953.83" cy="762.38" r="2.2" fill="#fff" stroke="#91cc75" stroke-width="1.5"/><circle cx="965.57" cy="762.38" r="2.2" fill="#fff" stroke="#91cc75" stroke-width="1.5"/><circle cx="977.31" cy="809.30" r="2.2" fill="#fff" stroke="#91cc75" stroke-width="1.5"/><circle cx="989.05" cy="809.30" r="2.2" fill="#fff" stroke="#91cc75" stroke-width="1.5"/><circle cx="1000.79" cy="809.30" r="2.2" fill="#fff" stroke="#91cc75" stroke-width="1.5"/><circle cx="1012.53" cy="711.38" r="2.2" fill="#fff" stroke="#91cc75" stroke-width="1.5"/><text x="1132.4" y="813.50" text-anchor="end" font-size="12" fill="#6e7079">0</text><line x1="1140.4" y1="785.01" x2="1856.6" y2="785.01" stroke="#e0e6f1" stroke-width="1"/><text x="1132.4" y="789.21" text-anchor="end" font-size="12" fill="#6e7079">0.5</text><line x1="1140.4" y1="760.73" x2="1856.6" y2="760.73" stroke="#e0e6f1" stroke-width="1"/><text x="1132.4" y="764.93" text-anchor="end" font-size="12" fill="#6e7079">1</text><line x1="1140.4" y1="736.44" x2="1856.6" y2="736.44" stroke="#e0e6f1" stroke-width="1"/><text x="1132.4" y="740.64" text-anchor="end" font-size="12" fill="#6e7079">1.5</text><line x1="1140.4" y1="712.16" x2="1856.6" y2="712.16" stroke="#e0e6f1" stroke-width="1"/><text x="1132.4" y="716.36" text-anchor="end" font-size="12" fill="#6e7079">2</text><line x1="1140.4" y1="687.87" x2="1856.6" y2="687.87" stroke="#e0e6f1" stroke-width="1"/><text x="1132.4" y="692.07" text-anchor="end" font-size="12" fill="#6e7079">2.5</text><line x1="1140.4" y1="663.59" x2="1856.6" y2="663.59" stroke="#e0e6f1" stroke-width="1"/><text x="1132.4" y="667.79" text-anchor="end" font-size="12" fill="#6e7079">3</text><line x1="1140.4" y1="639.30" x2="1856.6" y2="639.30" stroke="#e0e6f1" stroke-width="1"/><text x="1132.4" y="643.50" text-anchor="end" font-size="12" fill="#6e7079">3.5</text><line x1="1140.4" y1="809.3" x2="1856.6" y2="809.3" stroke="#6e7079" stroke-width="1"/><line x1="1140.40" y1="809.3" x2="1140.40" y2="814.3" stroke="#6e7079" stroke-width="1"/><line x1="1187.36" y1="809.3" x2="1187.36" y2="814.3" stroke="#6e7079" stroke-width="1"/><line x1="1234.33" y1="809.3" x2="1234.33" y2="814.3" stroke="#6e7079" stroke-width="1"/><line x1="1281.29" y1="809.3" x2="1281.29" y2="814.3" stroke="#6e7079" stroke-width="1"/><line x1="1328.26" y1="809.3" x2="1328.26" y2="814.3" stroke="#6e7079" stroke-width="1"/><line x1="1375.22" y1="809.3" x2="1375.22" y2="814.3" stroke="#6e7079" stroke-width="1"/><line x1="1422.18" y1="809.3" x2="1422.18" y2="814.3" stroke="#6e7079" stroke-width="1"/><line x1="1469.15" y1="809.3" x2="1469.15" y2="814.3" stroke="#6e7079" stroke-width="1"/><line x1="1516.11" y1="809.3" x2="1516.11" y2="814.3" stroke="#6e7079" stroke-width="1"/><line x1="1563.08" y1="809.3" x2="1563.08" y2="814.3" stroke="#6e7079" stroke-width="1"/><line x1="1610.04" y1="809.3" x2="1610.04" y2="814.3" stroke="#6e7079" stroke-width="1"/><line x1="1657.00" y1="809.3" x2="1657.00" y2="814.3" stroke="#6e7079" stroke-width="1"/><line x1="1703.97" y1="809.3" x2="1703.97" y2="814.3" stroke="#6e7079" stroke-width="1"/><line x1="1750.93" y1="809.3" x2="1750.93" y2="814.3" stroke="#6e7079" stroke-width="1"/><line x1="1797.90" y1="809.3" x2="1797.90" y2="814.3" stroke="#6e7079" stroke-width="1"/><line x1="1844.86" y1="809.3" x2="1844.86" y2="814.3" stroke="#6e7079" stroke-width="1"/><line x1="1856.60" y1="809.3" x2="1856.60" y2="814.3" stroke="#6e7079" stroke-width="1"/><text x="1146.27" y="827.60" text-anchor="middle" font-size="12" fill="#6e7079">17:02</text><text x="1193.23" y="827.60" text-anchor="middle" font-size="12" fill="#6e7079">17:06</text><text x="1240.20" y="827.60" text-anchor="middle" font-size="12" fill="#6e7079">17:10</text><text x="1287.16" y="827.60" text-anchor="middle" font-size="12" fill="#6e7079">17:14</text><text x="1334.13" y="827.60" text-anchor="middle" font-size="12" fill="#6e7079">17:18</text><text x="1381.09" y="827.60" text-anchor="middle" font-size="12" fill="#6e7079">17:22</text><text x="1428.05" y="827.60" text-anchor="middle" font-size="12" fill="#6e7079">17:26</text><text x="1475.02" y="827.60" text-anchor="middle" font-size="12" fill="#6e7079">17:30</text><text x="1521.98" y="827.60" text-anchor="middle" font-size="12" fill="#6e7079">17:34</text><text x="1568.95" y="827.60" text-anchor="middle" font-size="12" fill="#6e7079">17:38</text><text x="1615.91" y="827.60" text-anchor="middle" font-size="12" fill="#6e7079">17:42</text><text x="1662.87" y="827.60" text-anchor="middle" font-size="12" fill="#6e7079">17:46</text><text x="1709.84" y="827.60" text-anchor="middle" font-size="12" fill="#6e7079">17:50</text><text x="1756.80" y="827.60" text-anchor="middle" font-size="12" fill="#6e7079">17:54</text><text x="1803.77" y="827.60" text-anchor="middle" font-size="12" fill="#6e7079">17:58</text><text x="1850.73" y="827.60" text-anchor="middle" font-size="12" fill="#6e7079">18:02</text><path d="M1146.27 659.70 L1158.01 659.70 L1169.75 659.70 L1181.49 659.70 L1193.23 659.70 L1204.98 659.70 L1216.72 659.70 L1228.46 659.70 L1240.20 659.70 L1251.94 659.70 L1263.68 659.70 L1275.42 659.70 L1287.16 659.70 L1298.90 659.70 L1310.64 659.70 L1322.39 659.70 L1334.13 659.70 L1345.87 659.70 L1357.61 659.70 L1369.35 659.70 L1381.09 659.70 L1392.83 659.70 L1404.57 659.70 L1416.31 659.70 L1428.05 659.70 L1439.80 659.70 L1451.54 659.70 L1463.28 659.70 L1475.02 659.70 L1486.76 659.70 L1498.50 659.70 L1510.24 659.70 L1521.98 659.70 L1533.72 659.70 L1545.46 659.70 L1557.20 659.70 L1568.95 659.70 L1580.69 659.70 L1592.43 659.70 L1604.17 659.70 L1615.91 659.70 L1627.65 659.70 L1639.39 659.70 L1651.13 659.70 L1662.87 659.70 L1674.61 659.70 L1686.36 659.70 L1698.10 659.70 L1709.84 659.70 L1721.58 659.70 L1733.32 659.70 L1745.06 659.70 L1756.80 659.70 L1768.54 659.70 L1780.28 659.70 L1792.02 659.70 L1803.77 659.70 L1815.51 659.70 L1827.25 659.70 L1838.99 659.70 L1850.73 659.70" fill="none" stroke="#5470c6" stroke-width="2" stroke-linejoin="bevel"/><circle cx="1146.27" cy="659.70" r="2.2" fill="#fff" stroke="#5470c6" stroke-width="1.5"/><circle cx="1158.01" cy="659.70" r="2.2" fill="#fff" stroke="#5470c6" stroke-width="1.5"/><circle cx="1169.75" cy="659.70" r="2.2" fill="#fff" stroke="#5470c6" stroke-width="1.5"/><circle cx="1181.49" cy="659.70" r="2.2" fill="#fff" stroke="#5470c6" stroke-width="1.5"/><circle cx="1193.23" cy="659.70" r="2.2" fill="#fff" stroke="#5470c6" stroke-width="1.5"/><circle cx="1204.98" cy="659.70" r="2.2" fill="#fff" stroke="#5470c6" stroke-width="1.5"/><circle cx="1216.72" cy="659.70" r="2.2" fill="#fff" stroke="#5470c6" stroke-width="1.5"/><circle cx="1228.46" cy="659.70" r="2.2" fill="#fff" stroke="#5470c6" stroke-width="1.5"/><circle cx="1240.20" cy="659.70" r="2.2" fill="#fff" stroke="#5470c6" stroke-width="1.5"/><circle cx="1251.94" cy="659.70" r="2.2" fill="#fff" stroke="#5470c6" stroke-width="1.5"/><circle cx="1263.68" cy="659.70" r="2.2" fill="#fff" stroke="#5470c6" stroke-width="1.5"/><circle cx="1275.42" cy="659.70" r="2.2" fill="#fff" stroke="#5470c6" stroke-width="1.5"/><circle cx="1287.16" cy="659.70" r="2.2" fill="#fff" stroke="#5470c6" stroke-width="1.5"/><circle cx="1298.90" cy="659.70" r="2.2" fill="#fff" stroke="#5470c6" stroke-width="1.5"/><circle cx="1310.64" cy="659.70" r="2.2" fill="#fff" stroke="#5470c6" stroke-width="1.5"/><circle cx="1322.39" cy="659.70" r="2.2" fill="#fff" stroke="#5470c6" stroke-width="1.5"/><circle cx="1334.13" cy="659.70" r="2.2" fill="#fff" stroke="#5470c6" stroke-width="1.5"/><circle cx="1345.87" cy="659.70" r="2.2" fill="#fff" stroke="#5470c6" stroke-width="1.5"/><circle cx="1357.61" cy="659.70" r="2.2" fill="#fff" stroke="#5470c6" stroke-width="1.5"/><circle cx="1369.35" cy="659.70" r="2.2" fill="#fff" stroke="#5470c6" stroke-width="1.5"/><circle cx="1381.09" cy="659.70" r="2.2" fill="#fff" stroke="#5470c6" stroke-width="1.5"/><circle cx="1392.83" cy="659.70" r="2.2" fill="#fff" stroke="#5470c6" stroke-width="1.5"/><circle cx="1404.57" cy="659.70" r="2.2" fill="#fff" stroke="#5470c6" stroke-width="1.5"/><circle cx="1416.31" cy="659.70" r="2.2" fill="#fff" stroke="#5470c6" stroke-width="1.5"/><circle cx="1428.05" cy="659.70" r="2.2" fill="#fff" stroke="#5470c6" stroke-width="1.5"/><circle cx="1439.80" cy="659.70" r="2.2" fill="#fff" stroke="#5470c6" stroke-width="1.5"/><circle cx="1451.54" cy="659.70" r="2.2" fill="#fff" stroke="#5470c6" stroke-width="1.5"/><circle cx="1463.28" cy="659.70" r="2.2" fill="#fff" stroke="#5470c6" stroke-width="1.5"/><circle cx="1475.02" cy="659.70" r="2.2" fill="#fff" stroke="#5470c6" stroke-width="1.5"/><circle cx="1486.76" cy="659.70" r="2.2" fill="#fff" stroke="#5470c6" stroke-width="1.5"/><circle cx="1498.50" cy="659.70" r="2.2" fill="#fff" stroke="#5470c6" stroke-width="1.5"/><circle cx="1510.24" cy="659.70" r="2.2" fill="#fff" stroke="#5470c6" stroke-width="1.5"/><circle cx="1521.98" cy="659.70" r="2.2" fill="#fff" stroke="#5470c6" stroke-width="1.5"/><circle cx="1533.72" cy="659.70" r="2.2" fill="#fff" stroke="#5470c6" stroke-width="1.5"/><circle cx="1545.46" cy="659.70" r="2.2" fill="#fff" stroke="#5470c6" stroke-width="1.5"/><circle cx="1557.20" cy="659.70" r="2.2" fill="#fff" stroke="#5470c6" stroke-width="1.5"/><circle cx="1568.95" cy="659.70" r="2.2" fill="#fff" stroke="#5470c6" stroke-width="1.5"/><circle cx="1580.69" cy="659.70" r="2.2" fill="#fff" stroke="#5470c6" stroke-width="1.5"/><circle cx="1592.43" cy="659.70" r="2.2" fill="#fff" stroke="#5470c6" stroke-width="1.5"/><circle cx="1604.17" cy="659.70" r="2.2" fill="#fff" stroke="#5470c6" stroke-width="1.5"/><circle cx="1615.91" cy="659.70" r="2.2" fill="#fff" stroke="#5470c6" stroke-width="1.5"/><circle cx="1627.65" cy="659.70" r="2.2" fill="#fff" stroke="#5470c6" stroke-width="1.5"/><circle cx="1639.39" cy="659.70" r="2.2" fill="#fff" stroke="#5470c6" stroke-width="1.5"/><circle cx="1651.13" cy="659.70" r="2.2" fill="#fff" stroke="#5470c6" stroke-width="1.5"/><circle cx="1662.87" cy="659.70" r="2.2" fill="#fff" stroke="#5470c6" stroke-width="1.5"/><circle cx="1674.61" cy="659.70" r="2.2" fill="#fff" stroke="#5470c6" stroke-width="1.5"/><circle cx="1686.36" cy="659.70" r="2.2" fill="#fff" stroke="#5470c6" stroke-width="1.5"/><circle cx="1698.10" cy="659.70" r="2.2" fill="#fff" stroke="#5470c6" stroke-width="1.5"/><circle cx="1709.84" cy="659.70" r="2.2" fill="#fff" stroke="#5470c6" stroke-width="1.5"/><circle cx="1721.58" cy="659.70" r="2.2" fill="#fff" stroke="#5470c6" stroke-width="1.5"/><circle cx="1733.32" cy="659.70" r="2.2" fill="#fff" stroke="#5470c6" stroke-width="1.5"/><circle cx="1745.06" cy="659.70" r="2.2" fill="#fff" stroke="#5470c6" stroke-width="1.5"/><circle cx="1756.80" cy="659.70" r="2.2" fill="#fff" stroke="#5470c6" stroke-width="1.5"/><circle cx="1768.54" cy="659.70" r="2.2" fill="#fff" stroke="#5470c6" stroke-width="1.5"/><circle cx="1780.28" cy="659.70" r="2.2" fill="#fff" stroke="#5470c6" stroke-width="1.5"/><circle cx="1792.02" cy="659.70" r="2.2" fill="#fff" stroke="#5470c6" stroke-width="1.5"/><circle cx="1803.77" cy="659.70" r="2.2" fill="#fff" stroke="#5470c6" stroke-width="1.5"/><circle cx="1815.51" cy="659.70" r="2.2" fill="#fff" stroke="#5470c6" stroke-width="1.5"/><circle cx="1827.25" cy="659.70" r="2.2" fill="#fff" stroke="#5470c6" stroke-width="1.5"/><circle cx="1838.99" cy="659.70" r="2.2" fill="#fff" stroke="#5470c6" stroke-width="1.5"/><circle cx="1850.73" cy="659.70" r="2.2" fill="#fff" stroke="#5470c6" stroke-width="1.5"/><path d="M1146.27 761.21 L1158.01 761.21 L1169.75 713.61 L1181.49 713.61 L1193.23 713.61 L1204.98 761.21 L1216.72 761.21 L1228.46 809.30 L1240.20 809.30 L1251.94 809.30 L1263.68 761.21 L1275.42 761.21 L1287.16 713.61 L1298.90 713.61 L1310.64 713.61 L1322.39 761.21 L1334.13 761.21 L1345.87 809.30 L1357.61 809.30 L1369.35 809.30 L1381.09 761.21 L1392.83 761.21 L1404.57 713.61 L1416.31 713.61 L1428.05 713.61 L1439.80 761.21 L1451.54 761.21 L1463.28 809.30 L1475.02 809.30 L1486.76 809.30 L1498.50 761.21 L1510.24 761.21 L1521.98 713.61 L1533.72 713.61 L1545.46 713.61 L1557.20 761.21 L1568.95 761.21 L1580.69 809.30 L1592.43 809.30 L1604.17 809.30 L1615.91 761.21 L1627.65 761.21 L1639.39 713.61 L1651.13 713.61 L1662.87 713.61 L1674.61 761.21 L1686.36 761.21 L1698.10 809.30 L1709.84 809.30 L1721.58 809.30 L1733.32 761.21 L1745.06 761.21 L1756.80 713.61 L1768.54 713.61 L1780.28 713.61 L1792.02 761.21 L1803.77 761.21 L1815.51 809.30 L1827.25 809.30 L1838.99 809.30 L1850.73 761.21" fill="none" stroke="#91cc75" stroke-width="2" stroke-linejoin="bevel"/><circle cx="1146.27" cy="761.21" r="2.2" fill="#fff" stroke="#91cc75" stroke-width="1.5"/><circle cx="1158.01" cy="761.21" r="2.2" fill="#fff" stroke="#91cc75" stroke-width="1.5"/><circle cx="1169.75" cy="713.61" r="2.2" fill="#fff" stroke="#91cc75" stroke-width="1.5"/><circle cx="1181.49" cy="713.61" r="2.2" fill="#fff" stroke="#91cc75" stroke-width="1.5"/><circle cx="1193.23" cy="713.61" r="2.2" fill="#fff" stroke="#91cc75" stroke-width="1.5"/><circle cx="1204.98" cy="761.21" r="2.2" fill="#fff" stroke="#91cc75" stroke-width="1.5"/><circle cx="1216.72" cy="761.21" r="2.2" fill="#fff" stroke="#91cc75" stroke-width="1.5"/><circle cx="1228.46" cy="809.30" r="2.2" fill="#fff" stroke="#91cc75" stroke-width="1.5"/><circle cx="1240.20" cy="809.30" r="2.2" fill="#fff" stroke="#91cc75" stroke-width="1.5"/><circle cx="1251.94" cy="809.30" r="2.2" fill="#fff" stroke="#91cc75" stroke-width="1.5"/><circle cx="1263.68" cy="761.21" r="2.2" fill="#fff" stroke="#91cc75" stroke-width="1.5"/><circle cx="1275.42" cy="761.21" r="2.2" fill="#fff" stroke="#91cc75" stroke-width="1.5"/><circle cx="1287.16" cy="713.61" r="2.2" fill="#fff" stroke="#91cc75" stroke-width="1.5"/><circle cx="1298.90" cy="713.61" r="2.2" fill="#fff" stroke="#91cc75" stroke-width="1.5"/><circle cx="1310.64" cy="713.61" r="2.2" fill="#fff" stroke="#91cc75" stroke-width="1.5"/><circle cx="1322.39" cy="761.21" r="2.2" fill="#fff" stroke="#91cc75" stroke-width="1.5"/><circle cx="1334.13" cy="761.21" r="2.2" fill="#fff" stroke="#91cc75" stroke-width="1.5"/><circle cx="1345.87" cy="809.30" r="2.2" fill="#fff" stroke="#91cc75" stroke-width="1.5"/><circle cx="1357.61" cy="809.30" r="2.2" fill="#fff" stroke="#91cc75" stroke-width="1.5"/><circle cx="1369.35" cy="809.30" r="2.2" fill="#fff" stroke="#91cc75" stroke-width="1.5"/><circle cx="1381.09" cy="761.21" r="2.2" fill="#fff" stroke="#91cc75" stroke-width="1.5"/><circle cx="1392.83" cy="761.21" r="2.2" fill="#fff" stroke="#91cc75" stroke-width="1.5"/><circle cx="1404.57" cy="713.61" r="2.2" fill="#fff" stroke="#91cc75" stroke-width="1.5"/><circle cx="1416.31" cy="713.61" r="2.2" fill="#fff" stroke="#91cc75" stroke-width="1.5"/><circle cx="1428.05" cy="713.61" r="2.2" fill="#fff" stroke="#91cc75" stroke-width="1.5"/><circle cx="1439.80" cy="761.21" r="2.2" fill="#fff" stroke="#91cc75" stroke-width="1.5"/><circle cx="1451.54" cy="761.21" r="2.2" fill="#fff" stroke="#91cc75" stroke-width="1.5"/><circle cx="1463.28" cy="809.30" r="2.2" fill="#fff" stroke="#91cc75" stroke-width="1.5"/><circle cx="1475.02" cy="809.30" r="2.2" fill="#fff" stroke="#91cc75" stroke-width="1.5"/><circle cx="1486.76" cy="809.30" r="2.2" fill="#fff" stroke="#91cc75" stroke-width="1.5"/><circle cx="1498.50" cy="761.21" r="2.2" fill="#fff" stroke="#91cc75" stroke-width="1.5"/><circle cx="1510.24" cy="761.21" r="2.2" fill="#fff" stroke="#91cc75" stroke-width="1.5"/><circle cx="1521.98" cy="713.61" r="2.2" fill="#fff" stroke="#91cc75" stroke-width="1.5"/><circle cx="1533.72" cy="713.61" r="2.2" fill="#fff" stroke="#91cc75" stroke-width="1.5"/><circle cx="1545.46" cy="713.61" r="2.2" fill="#fff" stroke="#91cc75" stroke-width="1.5"/><circle cx="1557.20" cy="761.21" r="2.2" fill="#fff" stroke="#91cc75" stroke-width="1.5"/><circle cx="1568.95" cy="761.21" r="2.2" fill="#fff" stroke="#91cc75" stroke-width="1.5"/><circle cx="1580.69" cy="809.30" r="2.2" fill="#fff" stroke="#91cc75" stroke-width="1.5"/><circle cx="1592.43" cy="809.30" r="2.2" fill="#fff" stroke="#91cc75" stroke-width="1.5"/><circle cx="1604.17" cy="809.30" r="2.2" fill="#fff" stroke="#91cc75" stroke-width="1.5"/><circle cx="1615.91" cy="761.21" r="2.2" fill="#fff" stroke="#91cc75" stroke-width="1.5"/><circle cx="1627.65" cy="761.21" r="2.2" fill="#fff" stroke="#91cc75" stroke-width="1.5"/><circle cx="1639.39" cy="713.61" r="2.2" fill="#fff" stroke="#91cc75" stroke-width="1.5"/><circle cx="1651.13" cy="713.61" r="2.2" fill="#fff" stroke="#91cc75" stroke-width="1.5"/><circle cx="1662.87" cy="713.61" r="2.2" fill="#fff" stroke="#91cc75" stroke-width="1.5"/><circle cx="1674.61" cy="761.21" r="2.2" fill="#fff" stroke="#91cc75" stroke-width="1.5"/><circle cx="1686.36" cy="761.21" r="2.2" fill="#fff" stroke="#91cc75" stroke-width="1.5"/><circle cx="1698.10" cy="809.30" r="2.2" fill="#fff" stroke="#91cc75" stroke-width="1.5"/><circle cx="1709.84" cy="809.30" r="2.2" fill="#fff" stroke="#91cc75" stroke-width="1.5"/><circle cx="1721.58" cy="809.30" r="2.2" fill="#fff" stroke="#91cc75" stroke-width="1.5"/><circle cx="1733.32" cy="761.21" r="2.2" fill="#fff" stroke="#91cc75" stroke-width="1.5"/><circle cx="1745.06" cy="761.21" r="2.2" fill="#fff" stroke="#91cc75" stroke-width="1.5"/><circle cx="1756.80" cy="713.61" r="2.2" fill="#fff" stroke="#91cc75" stroke-width="1.5"/><circle cx="1768.54" cy="713.61" r="2.2" fill="#fff" stroke="#91cc75" stroke-width="1.5"/><circle cx="1780.28" cy="713.61" r="2.2" fill="#fff" stroke="#91cc75" stroke-width="1.5"/><circle cx="1792.02" cy="761.21" r="2.2" fill="#fff" stroke="#91cc75" stroke-width="1.5"/><circle cx="1803.77" cy="761.21" r="2.2" fill="#fff" stroke="#91cc75" stroke-width="1.5"/><circle cx="1815.51" cy="809.30" r="2.2" fill="#fff" stroke="#91cc75" stroke-width="1.5"/><circle cx="1827.25" cy="809.30" r="2.2" fill="#fff" stroke="#91cc75" stroke-width="1.5"/><circle cx="1838.99" cy="809.30" r="2.2" fill="#fff" stroke="#91cc75" stroke-width="1.5"/><circle cx="1850.73" cy="761.21" r="2.2" fill="#fff" stroke="#91cc75" stroke-width="1.5"/><line x1="542.5" y1="847.3" x2="566.5" y2="847.3" stroke="#5470c6" stroke-width="2"/><circle cx="554.5" cy="847.3" r="5" fill="#fff" stroke="#5470c6" stroke-width="2"/><text x="572.0" y="851.5" font-size="12" fill="#333">Alloc Rate</text><line x1="640.2" y1="847.3" x2="664.2" y2="847.3" stroke="#91cc75" stroke-width="2"/><circle cx="652.2" cy="847.3" r="5" fill="#fff" stroke="#91cc75" stroke-width="2"/><text x="670.5" y="851.5" font-size="12" fill="#333">Usage Rate</text><line x1="1380.5" y1="847.3" x2="1404.5" y2="847.3" stroke="#5470c6" stroke-width="2"/><circle cx="1392.5" cy="847.3" r="5" fill="#fff" stroke="#5470c6" stroke-width="2"/><text x="1410.0" y="851.5" font-size="12" fill="#333">Alloc Rate</text><line x1="1478.2" y1="847.3" x2="1502.2" y2="847.3" stroke="#91cc75" stroke-width="2"/><circle cx="1490.2" cy="847.3" r="5" fill="#fff" stroke="#91cc75" stroke-width="2"/><text x="1508.5" y="851.5" font-size="12" fill="#333">Usage Rate</text><rect x="278" y="432" width="12" height="3.8" fill="#b8c4d0"/><rect x="278" y="438" width="12" height="3.8" fill="#b8c4d0"/><rect x="283" y="430" width="2" height="14" fill="#7d8792"/><rect x="283" y="435.8" width="2" height="2.2" fill="#fff" opacity="0.0"/><rect x="279" y="433.2" width="1.6" height="1.6" fill="#7d8792" opacity="0.7"/><rect x="279" y="439.2" width="1.6" height="1.6" fill="#7d8792" opacity="0.7"/><rect x="281.8" y="433" width="1.4" height="2" fill="#334155"/><rect x="281.8" y="439" width="1.4" height="2" fill="#334155"/><rect x="501" y="432.8" width="11.6" height="9.2" rx="1.3" fill="#b8c4d0"/><rect x="513.2" y="431" width="1.9" height="11.8" rx="0.6" fill="#1e3350"/><circle cx="505.4" cy="437.6" r="3.3" fill="#fff"/><circle cx="505.4" cy="435.9" r="0.6" fill="#1e3350"/><circle cx="504.1" cy="438.4" r="0.6" fill="#1e3350"/><circle cx="506.6" cy="438.6" r="0.6" fill="#1e3350"/><rect x="510" y="434" width="1.8" height="0.8" fill="#1e3350" opacity="0.8"/><rect x="510" y="436" width="1.8" height="0.8" fill="#1e3350" opacity="0.8"/><rect x="502" y="442" width="1.8" height="1" fill="#1e3350"/><rect x="505" y="442" width="1.8" height="1" fill="#1e3350"/><rect x="508" y="442" width="1.8" height="1" fill="#1e3350"/><rect x="726" y="431" width="1.8" height="11.8" rx="0.6" fill="#1e3350"/><rect x="728.2" y="431.8" width="9.6" height="8.8" fill="#b8c4d0"/><rect x="733.2" y="435" width="2.8" height="2.8" fill="#1e3350"/><rect x="729.2" y="436" width="4" height="0.8" fill="#1e3350" opacity="0.8"/><path d="M730 440.8 H737 V442.8 H730 Z" fill="#1e3350"/><rect x="731.6" y="440.6" width="0.6" height="1" fill="#fff"/><rect x="733.4" y="440.6" width="0.6" height="1" fill="#fff"/><rect x="735.2" y="440.6" width="0.6" height="1" fill="#fff"/><rect x="950" y="431" width="12" height="11.8" rx="1.5" fill="#b8c4d0"/><rect x="954" y="435" width="4" height="3.8" fill="#1e3350"/><rect x="954.2" y="432" width="1" height="1" fill="#1e3350" opacity="0.8"/><rect x="957" y="432" width="1" height="1" fill="#1e3350" opacity="0.8"/><rect x="954.2" y="440.8" width="1" height="1" fill="#1e3350" opacity="0.8"/><rect x="957" y="440.8" width="1" height="1" fill="#1e3350" opacity="0.8"/><rect x="951" y="435" width="1" height="1" fill="#1e3350" opacity="0.8"/><rect x="951" y="437.8" width="1" height="1" fill="#1e3350" opacity="0.8"/><rect x="960" y="435" width="1" height="1" fill="#1e3350" opacity="0.8"/><rect x="960" y="437.8" width="1" height="1" fill="#1e3350" opacity="0.8"/><rect x="1173.3" y="431" width="1.9" height="11.8" rx="0.9" fill="#1e3350"/><path d="M1175.6 431.8 H1186 Q1186.8 431.8 1186.8 432.6 V440.8 Q1186.8 441.6 1186 441.6 H1179.6 L1178.6 440 H1177.4 L1176.4 441.6 H1175.6 Z" fill="#b8c4d0"/><rect x="1181" y="434.2" width="4.6" height="2.6" fill="#1e3350"/><rect x="1176.8" y="434" width="2.2" height="0.8" fill="#1e3350" opacity="0.8"/><rect x="1176.8" y="436" width="2.2" height="0.8" fill="#1e3350" opacity="0.8"/><rect x="1181.2" y="439" width="0.8" height="0.8" fill="#1e3350" opacity="0.6"/><rect x="1183.2" y="439" width="0.8" height="0.8" fill="#1e3350" opacity="0.6"/><rect x="1185.1" y="439" width="0.8" height="0.8" fill="#1e3350" opacity="0.6"/><path d="M1644.99 341.45 A54.4 54.4 0 1 1 1620.98 446.64 L1625.25 437.76 A44.6 44.6 0 1 0 1644.99 351.30 Z" fill="#5470c6" stroke="#5470c6" stroke-width="8.4" stroke-linejoin="round"/><path d="M1611.63 442.14 A54.4 54.4 0 0 1 1634.61 341.45 L1634.61 351.30 A44.6 44.6 0 0 0 1615.91 433.26 Z" fill="#91cc75" stroke="#91cc75" stroke-width="8.4" stroke-linejoin="round"/><path d="M1580.6 381.5 L1573 379 L1422 379" fill="none" stroke="#cfd6e4" stroke-width="1"/><text x="1422.3" y="374.5" font-size="12" fill="#3d4a5c" letter-spacing="0.1">NVIDIA L4</text><text x="1422.3" y="392" font-size="11" fill="#8a94a0">3</text><path d="M1698.8 408.3 L1707.5 410.5 L1856.8 410.5" fill="none" stroke="#cfd6e4" stroke-width="1"/><text x="1857" y="407" font-size="12" fill="#3d4a5c" text-anchor="end" letter-spacing="0.25">NVIDIA–Tesla T4</text><text x="1856.8" y="424" font-size="11" fill="#8a94a0" text-anchor="end">4</text></svg>
</body></html>
